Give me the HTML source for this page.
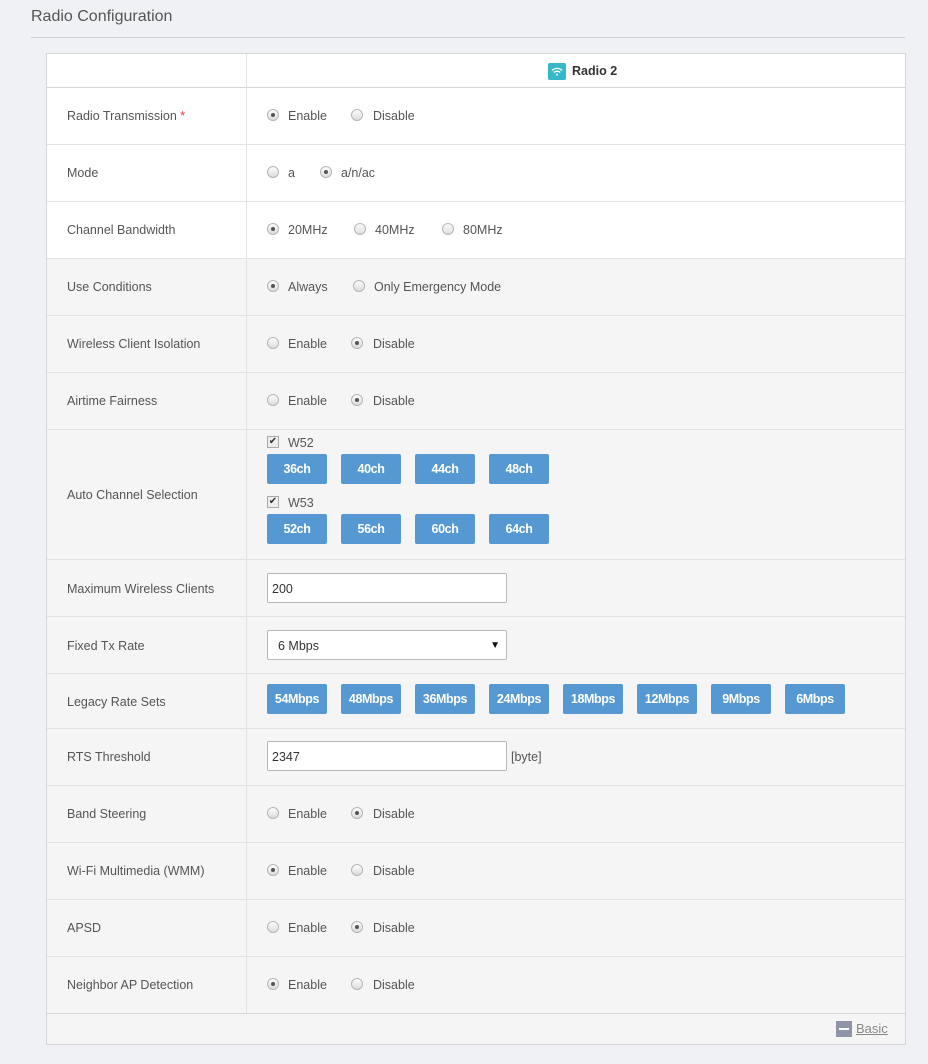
<!DOCTYPE html>
<html><head><meta charset="utf-8"><style>
body{margin:0;width:928px;height:1064px;background:#f0f1f5;font-family:"Liberation Sans",sans-serif;color:#555;position:relative;overflow:hidden}
.title{position:absolute;left:31px;top:8px;font-size:16px;color:#555}
.hr{position:absolute;left:31px;top:37px;width:874px;height:1px;background:#cfd0d4}
.tbl{position:absolute;left:46px;top:53px;width:858px;height:990px;border:1px solid #d6d6d6;background:#f5f5f5}
.row{position:absolute;left:0;width:858px;border-bottom:1px solid #e3e3e3;font-size:12.5px}
.row.w{background:#fff}
.lab{position:absolute;left:20px;}
.vd{position:absolute;left:199px;top:0;width:1px;height:959px;background:#e3e3e3;z-index:5}
.rd{position:absolute;width:10px;height:10px;border-radius:50%;border:1px solid #b5b5b5;background:linear-gradient(#fdfdfd,#dcdcdc);box-sizing:content-box}
.rd.on::after{content:"";position:absolute;left:3px;top:3px;width:4px;height:4px;border-radius:50%;background:#555}
.t{position:absolute}
.btn{position:absolute;width:60px;height:30px;background:#5598d2;border-radius:2px;color:#fff;font-weight:bold;font-size:12.5px;text-align:center;line-height:31px;letter-spacing:-0.4px}
.inp{position:absolute;left:220px;width:240px;height:30px;border:1px solid #b8b8b8;border-radius:2px;background:#fff;color:#333;font-size:12.5px;line-height:30px;padding-left:4px;box-sizing:border-box}
.cb{position:absolute;width:10px;height:10px;border:1px solid #aaa;background:#eee;font-size:10px;line-height:10px;text-align:center;color:#333}
</style></head><body>
<div class="title">Radio Configuration</div>
<div class="hr"></div>
<div class="tbl">
<div class="row w" style="top:0;height:33px;border-bottom:1px solid #d6d6d6">
 <div style="position:absolute;left:501px;top:9px;width:18px;height:17px;background:#35b8c8;border-radius:2px">
  <svg width="18" height="17" viewBox="0 0 18 17"><path d="M4 7.5a7 7 0 0 1 10 0M5.8 9.5a4.5 4.5 0 0 1 6.4 0" stroke="#fff" stroke-width="1.3" fill="none"/><circle cx="9" cy="11.6" r="1" fill="#fff"/></svg>
 </div>
 <div class="t" style="left:525px;top:10px;font-weight:bold;color:#333">Radio 2</div>
</div>

<div class="row w" style="top:34px;height:56px"><div class="lab" style="top:21px">Radio Transmission <span style="color:#d9403a">*</span></div>
<div class="rd on" style="left:220px;top:21px"></div><div class="t" style="left:241px;top:21px">Enable</div>
<div class="rd" style="left:304px;top:21px"></div><div class="t" style="left:326px;top:21px">Disable</div></div>

<div class="row w" style="top:91px;height:56px"><div class="lab" style="top:21px">Mode</div>
<div class="rd" style="left:220px;top:21px"></div><div class="t" style="left:241px;top:21px">a</div>
<div class="rd on" style="left:273px;top:21px"></div><div class="t" style="left:294px;top:21px">a/n/ac</div></div>

<div class="row w" style="top:148px;height:56px"><div class="lab" style="top:21px">Channel Bandwidth</div>
<div class="rd on" style="left:220px;top:21px"></div><div class="t" style="left:241px;top:21px">20MHz</div>
<div class="rd" style="left:307px;top:21px"></div><div class="t" style="left:328px;top:21px">40MHz</div>
<div class="rd" style="left:395px;top:21px"></div><div class="t" style="left:416px;top:21px">80MHz</div></div>

<div class="row" style="top:205px;height:56px"><div class="lab" style="top:21px">Use Conditions</div>
<div class="rd on" style="left:220px;top:21px"></div><div class="t" style="left:241px;top:21px">Always</div>
<div class="rd" style="left:306px;top:21px"></div><div class="t" style="left:327px;top:21px">Only Emergency Mode</div></div>

<div class="row" style="top:262px;height:56px"><div class="lab" style="top:21px">Wireless Client Isolation</div>
<div class="rd" style="left:220px;top:21px"></div><div class="t" style="left:241px;top:21px">Enable</div>
<div class="rd on" style="left:304px;top:21px"></div><div class="t" style="left:326px;top:21px">Disable</div></div>

<div class="row" style="top:319px;height:56px"><div class="lab" style="top:21px">Airtime Fairness</div>
<div class="rd" style="left:220px;top:21px"></div><div class="t" style="left:241px;top:21px">Enable</div>
<div class="rd on" style="left:304px;top:21px"></div><div class="t" style="left:326px;top:21px">Disable</div></div>

<div class="row" style="top:376px;height:129px"><div class="lab" style="top:58px">Auto Channel Selection</div>
<div class="cb" style="left:220px;top:6px">✔</div><div class="t" style="left:241px;top:6px">W52</div>
<div class="btn" style="left:220px;top:24px">36ch</div><div class="btn" style="left:294px;top:24px">40ch</div><div class="btn" style="left:368px;top:24px">44ch</div><div class="btn" style="left:442px;top:24px">48ch</div>
<div class="cb" style="left:220px;top:66px">✔</div><div class="t" style="left:241px;top:66px">W53</div>
<div class="btn" style="left:220px;top:84px">52ch</div><div class="btn" style="left:294px;top:84px">56ch</div><div class="btn" style="left:368px;top:84px">60ch</div><div class="btn" style="left:442px;top:84px">64ch</div></div>

<div class="row" style="top:506px;height:56px"><div class="lab" style="top:22px">Maximum Wireless Clients</div>
<div class="inp" style="top:13px">200</div></div>

<div class="row" style="top:563px;height:56px"><div class="lab" style="top:22px">Fixed Tx Rate</div>
<div class="inp" style="top:13px;padding-left:10px">6 Mbps<span style="position:absolute;right:6px;top:0;font-size:10px;color:#111">▼</span></div></div>

<div class="row" style="top:620px;height:54px"><div class="lab" style="top:21px">Legacy Rate Sets</div>
<div class="btn" style="left:220px;top:10px">54Mbps</div><div class="btn" style="left:294px;top:10px">48Mbps</div><div class="btn" style="left:368px;top:10px">36Mbps</div><div class="btn" style="left:442px;top:10px">24Mbps</div><div class="btn" style="left:516px;top:10px">18Mbps</div><div class="btn" style="left:590px;top:10px">12Mbps</div><div class="btn" style="left:664px;top:10px">9Mbps</div><div class="btn" style="left:738px;top:10px">6Mbps</div></div>

<div class="row" style="top:675px;height:56px"><div class="lab" style="top:21px">RTS Threshold</div>
<div class="inp" style="top:12px">2347</div><div class="t" style="left:464px;top:21px">[byte]</div></div>

<div class="row" style="top:732px;height:56px"><div class="lab" style="top:21px">Band Steering</div>
<div class="rd" style="left:220px;top:21px"></div><div class="t" style="left:241px;top:21px">Enable</div>
<div class="rd on" style="left:304px;top:21px"></div><div class="t" style="left:326px;top:21px">Disable</div></div>

<div class="row" style="top:789px;height:56px"><div class="lab" style="top:21px">Wi-Fi Multimedia (WMM)</div>
<div class="rd on" style="left:220px;top:21px"></div><div class="t" style="left:241px;top:21px">Enable</div>
<div class="rd" style="left:304px;top:21px"></div><div class="t" style="left:326px;top:21px">Disable</div></div>

<div class="row" style="top:846px;height:56px"><div class="lab" style="top:21px">APSD</div>
<div class="rd" style="left:220px;top:21px"></div><div class="t" style="left:241px;top:21px">Enable</div>
<div class="rd on" style="left:304px;top:21px"></div><div class="t" style="left:326px;top:21px">Disable</div></div>

<div class="row" style="top:903px;height:56px;border-bottom:1px solid #d6d6d6"><div class="lab" style="top:21px">Neighbor AP Detection</div>
<div class="rd on" style="left:220px;top:21px"></div><div class="t" style="left:241px;top:21px">Enable</div>
<div class="rd" style="left:304px;top:21px"></div><div class="t" style="left:326px;top:21px">Disable</div></div>

<div class="vd"></div>
<div style="position:absolute;left:789px;top:967px;width:16px;height:16px;background:#8f95a6"><div style="position:absolute;left:3px;top:7px;width:10px;height:2px;background:#fff"></div></div>
<div class="t" style="left:809px;top:967px;font-size:13px;color:#888;text-decoration:underline">Basic</div>
</div>
</body></html>
